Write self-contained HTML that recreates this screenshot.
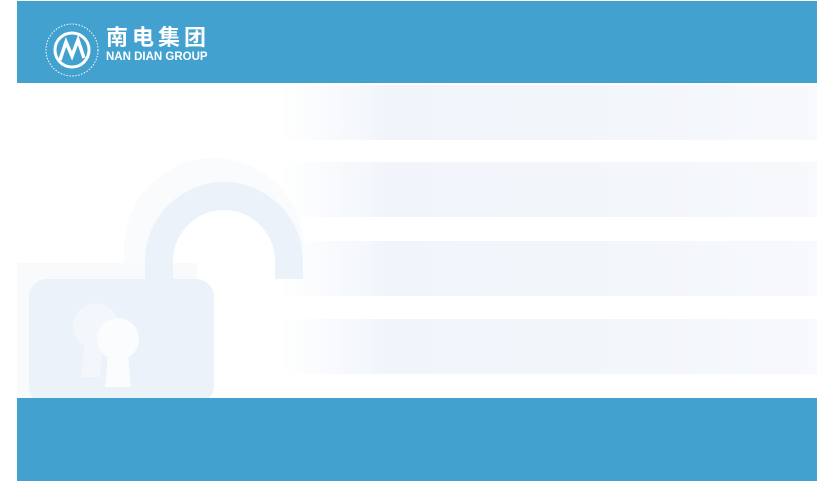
<!DOCTYPE html>
<html><head><meta charset="utf-8"><style>
body{margin:0;width:818px;height:481px;background:#fff;position:relative;overflow:hidden;font-family:"Liberation Sans","Noto Sans CJK SC",sans-serif}
.b{position:absolute;left:17px;width:800px;background:#43a1cf}
.s{position:absolute;left:280px;width:537px;height:55px;background:linear-gradient(90deg,rgba(240,245,251,0),#f1f5fb 20%,#f3f6fb 70%,#f7f9fc)}
</style></head><body>
<div class="b" style="top:1px;height:82px"></div>
<div class="b" style="top:398px;height:83px"></div>
<div class="s" style="top:85px"></div>
<div class="s" style="top:162px"></div>
<div class="s" style="top:241px"></div>
<div class="s" style="top:319px"></div>
<svg style="position:absolute;left:0;top:150px" width="340" height="248">
<path d="M139 113 V98 A75 75 0 0 1 289 98" fill="none" stroke="#f9fbfd" stroke-width="30"/>
<rect x="17" y="113" width="180" height="135" fill="#f8fafc"/>
<path d="M159 130 V111 A65 65 0 0 1 289 111 V129" fill="none" stroke="#ecf2f9" stroke-width="28"/>
<rect x="29" y="129" width="185" height="125" rx="18" fill="#ecf2f9"/>
<circle cx="96" cy="176" r="23" fill="#f3f6fb"/>
<path d="M85 190 L81 227 H100 L104 190Z" fill="#f3f6fb"/>
<circle cx="118" cy="189" r="21" fill="#fbfcfe"/>
<path d="M108 205 L105 237 H131 L128 205Z" fill="#fbfcfe"/>
</svg>
<svg style="position:absolute;left:44px;top:22px" width="56" height="56">
<circle cx="28" cy="28" r="26" fill="none" stroke="#fff" stroke-width="1" stroke-dasharray="1.5 1.5"/>
<circle cx="28" cy="28" r="17" fill="none" stroke="#fff" stroke-width="3"/>
<path d="M16 38 L22 20 L28 34 L34 18 L40 36" fill="none" stroke="#fff" stroke-width="3.5"/>
</svg>
<div style="position:absolute;left:106px;top:26px;color:#fff;font-size:22px;font-weight:bold;letter-spacing:4px;line-height:24px">南电集团</div>
<div style="position:absolute;left:106px;top:51px;color:#fff;font-size:11.5px;font-weight:bold;line-height:12px">NAN DIAN GROUP</div>
</body></html>
